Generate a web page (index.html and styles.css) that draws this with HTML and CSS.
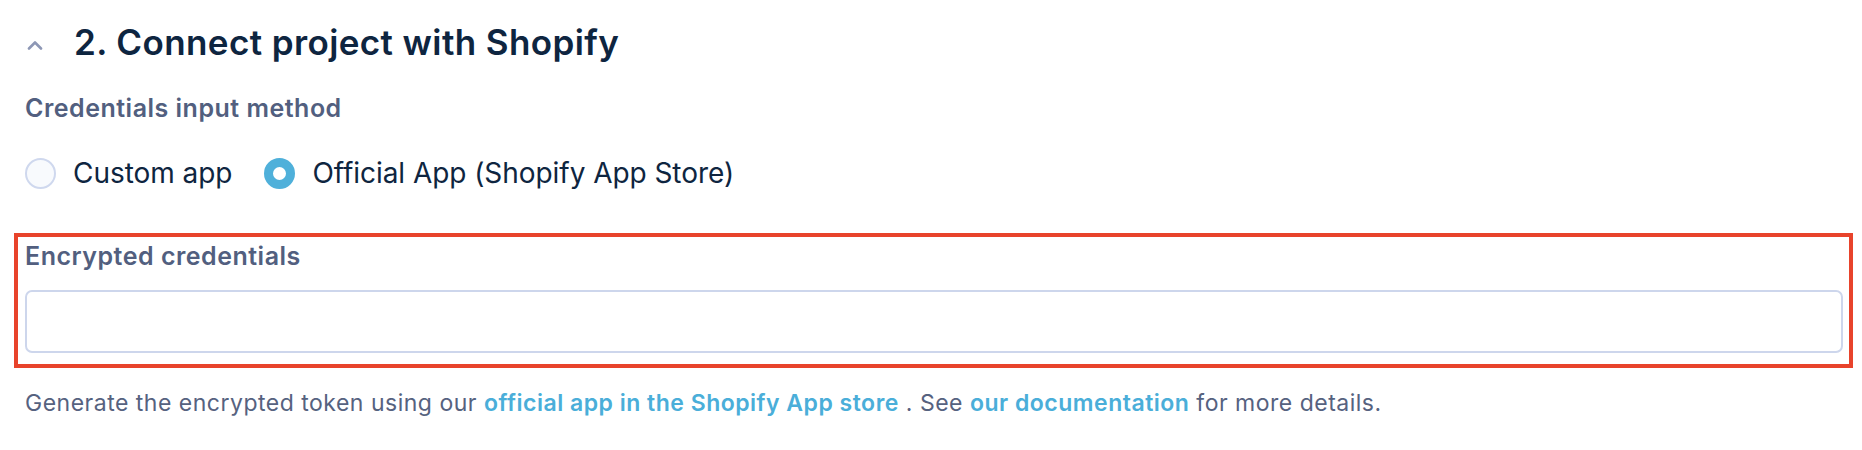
FILE: index.html
```html
<!DOCTYPE html>
<html lang="en">
<head>
<meta charset="utf-8">
<title>Connect project with Shopify</title>
<link rel="stylesheet" href="styles.css">
</head>
<body>
<section class="step">
  <header class="step-header">
    <span class="chevron">
      <svg width="16" height="10" viewBox="0 0 16 10"><path d="M2 8.5 L8 2.5 L14 8.5" fill="none" stroke="#8d97b5" stroke-width="2.6" stroke-linecap="round" stroke-linejoin="round"/></svg>
    </span>
    <h2 class="step-title">2. Connect project with Shopify</h2>
  </header>

  <div class="field">
    <div class="field-label">Credentials input method</div>
    <div class="radio-group">
      <label class="radio"><span class="radio-dot"></span><span class="radio-text">Custom app</span></label>
      <label class="radio checked"><span class="radio-dot"></span><span class="radio-text">Official App (Shopify App Store)</span></label>
    </div>
  </div>

  <div class="highlight">
    <div class="field-label">Encrypted credentials</div>
    <div class="text-input"></div>
  </div>

  <p class="help">Generate the encrypted token using our <a href="#">official app in the Shopify App store</a> . See <a href="#">our documentation</a> for more details.</p>
</section>
</body>
</html>
```

FILE: styles.css
```css
html, body {
  margin: 0;
  padding: 0;
  background: #ffffff;
}
body {
  font-family: Inter, "Noto Sans", sans-serif;
  color: #0e2540;
}
.step {
  padding: 21px 19px 0 25px;
}
.step-header {
  display: flex;
  align-items: center;
  height: 42px;
}
.chevron {
  display: flex;
  width: 16px;
  height: 10px;
  margin-left: 2px;
  margin-right: 31px;
  margin-top: 5px;
}
.step-title {
  margin: 0;
  font-size: 35px;
  line-height: 42px;
  font-weight: 600;
  letter-spacing: 0.4px;
  color: #0e2540;
}
.field {
  margin-top: 30px;
}
.field-label {
  font-size: 25px;
  line-height: 30px;
  font-weight: 600;
  letter-spacing: 0.5px;
  color: #525f7f;
}
.radio-group {
  display: flex;
  align-items: center;
  margin-top: 34px;
  gap: 32px;
}
.radio {
  display: flex;
  align-items: center;
  gap: 17px;
}
.radio-dot {
  box-sizing: border-box;
  width: 31px;
  height: 31px;
  border-radius: 50%;
  border: 2px solid #cfd8ee;
  background: #f8fafd;
}
.radio.checked .radio-dot {
  border: 9.5px solid #4fb0da;
  background: #ffffff;
}
.radio-text {
  font-size: 28px;
  line-height: 32px;
  letter-spacing: -0.05px;
  color: #0e2540;
}
.highlight {
  margin: 44px -10px 0 -11px;
  border: 4px solid #e8432b;
  padding: 4px 6px 11px 7px;
}
.text-input {
  margin-top: 19px;
  height: 63px;
  box-sizing: border-box;
  border: 2px solid #cdd6ec;
  border-radius: 7px;
  background: #ffffff;
}
.help {
  margin: 21px 0 0;
  font-size: 23px;
  line-height: 28px;
  letter-spacing: 0.5px;
  color: #56627f;
}
.help a {
  color: #4aaed9;
  font-weight: 600;
  text-decoration: none;
}
```
